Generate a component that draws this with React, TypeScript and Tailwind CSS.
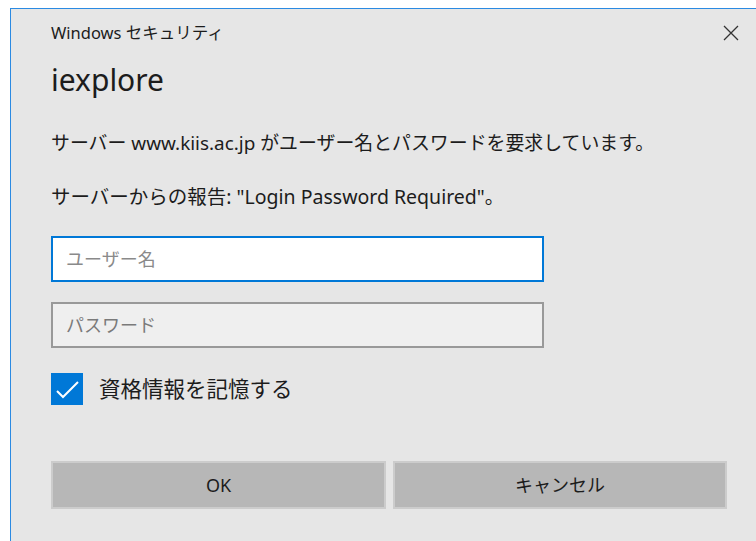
import { useState } from "react";

const FONT = { fontFamily: '"Noto Sans", "Noto Sans CJK JP", sans-serif' };

function CloseIcon() {
  return (
    <svg width="16" height="16" viewBox="0 0 16 16" className="text-[#333]">
      <path d="M1 1 L15 15 M15 1 L1 15" stroke="currentColor" strokeWidth="1.3" fill="none" />
    </svg>
  );
}

function CheckBox({ checked, onToggle }: { checked: boolean; onToggle: () => void }) {
  return (
    <button
      onClick={onToggle}
      className={`w-[32px] h-[32px] flex items-center justify-center ${
        checked ? "bg-[#0078d7]" : "bg-white border-2 border-[#333]"
      }`}
    >
      {checked && (
        <svg width="32" height="32" viewBox="0 0 32 32">
          <polyline points="6,18 12,24 27,9" stroke="white" strokeWidth="2" fill="none" />
        </svg>
      )}
    </button>
  );
}

export default function App() {
  const [user, setUser] = useState("");
  const [pass, setPass] = useState("");
  const [remember, setRemember] = useState(true);

  return (
    <div className="w-[756px] h-[541px] bg-white pt-[8px] pl-[10px] overflow-hidden" style={FONT}>
      <div className="h-full bg-[#e6e6e6] border-t border-l border-[#2b8ae2] flex flex-col pl-[40px] text-[#1c1c1c]">
        {/* Title bar */}
        <div className="h-[48px] flex items-center justify-between pr-[17px]">
          <span className="text-[16.5px]">Windows セキュリティ</span>
          <CloseIcon />
        </div>

        <div className="mt-[7px] text-[30px] leading-[32px]">iexplore</div>

        <p className="mt-[35px] text-[18.9px] leading-[24px] whitespace-nowrap">
          サーバー www.kiis.ac.jp がユーザー名とパスワードを要求しています。
        </p>
        <p className="mt-[30px] text-[19.5px] leading-[24px] whitespace-nowrap">
          サーバーからの報告: "Login Password Required"。
        </p>

        <input
          value={user}
          onChange={(e) => setUser(e.target.value)}
          placeholder="ユーザー名"
          className="mt-[27px] w-[493px] h-[46px] bg-white border-2 border-[#0078d7] px-[13px] text-[18px] outline-none placeholder:text-[#8a8a8a]"
          style={FONT}
        />
        <input
          type="password"
          value={pass}
          onChange={(e) => setPass(e.target.value)}
          placeholder="パスワード"
          className="mt-[20px] w-[493px] h-[46px] bg-[#efefef] border-2 border-[#999999] px-[13px] text-[18px] outline-none placeholder:text-[#7a7a7a]"
          style={FONT}
        />

        <label className="mt-[25px] flex items-center gap-[16px]">
          <CheckBox checked={remember} onToggle={() => setRemember(!remember)} />
          <span className="text-[21.5px]">資格情報を記憶する</span>
        </label>

        <div className="mt-[56px] flex gap-[7px]">
          <button className="w-[335px] h-[48px] bg-[#b7b7b7] border-2 border-[#cccccc] text-[18px]">
            OK
          </button>
          <button className="w-[334px] h-[48px] bg-[#b7b7b7] border-2 border-[#cccccc] text-[18px]">
            キャンセル
          </button>
        </div>
      </div>
    </div>
  );
}
